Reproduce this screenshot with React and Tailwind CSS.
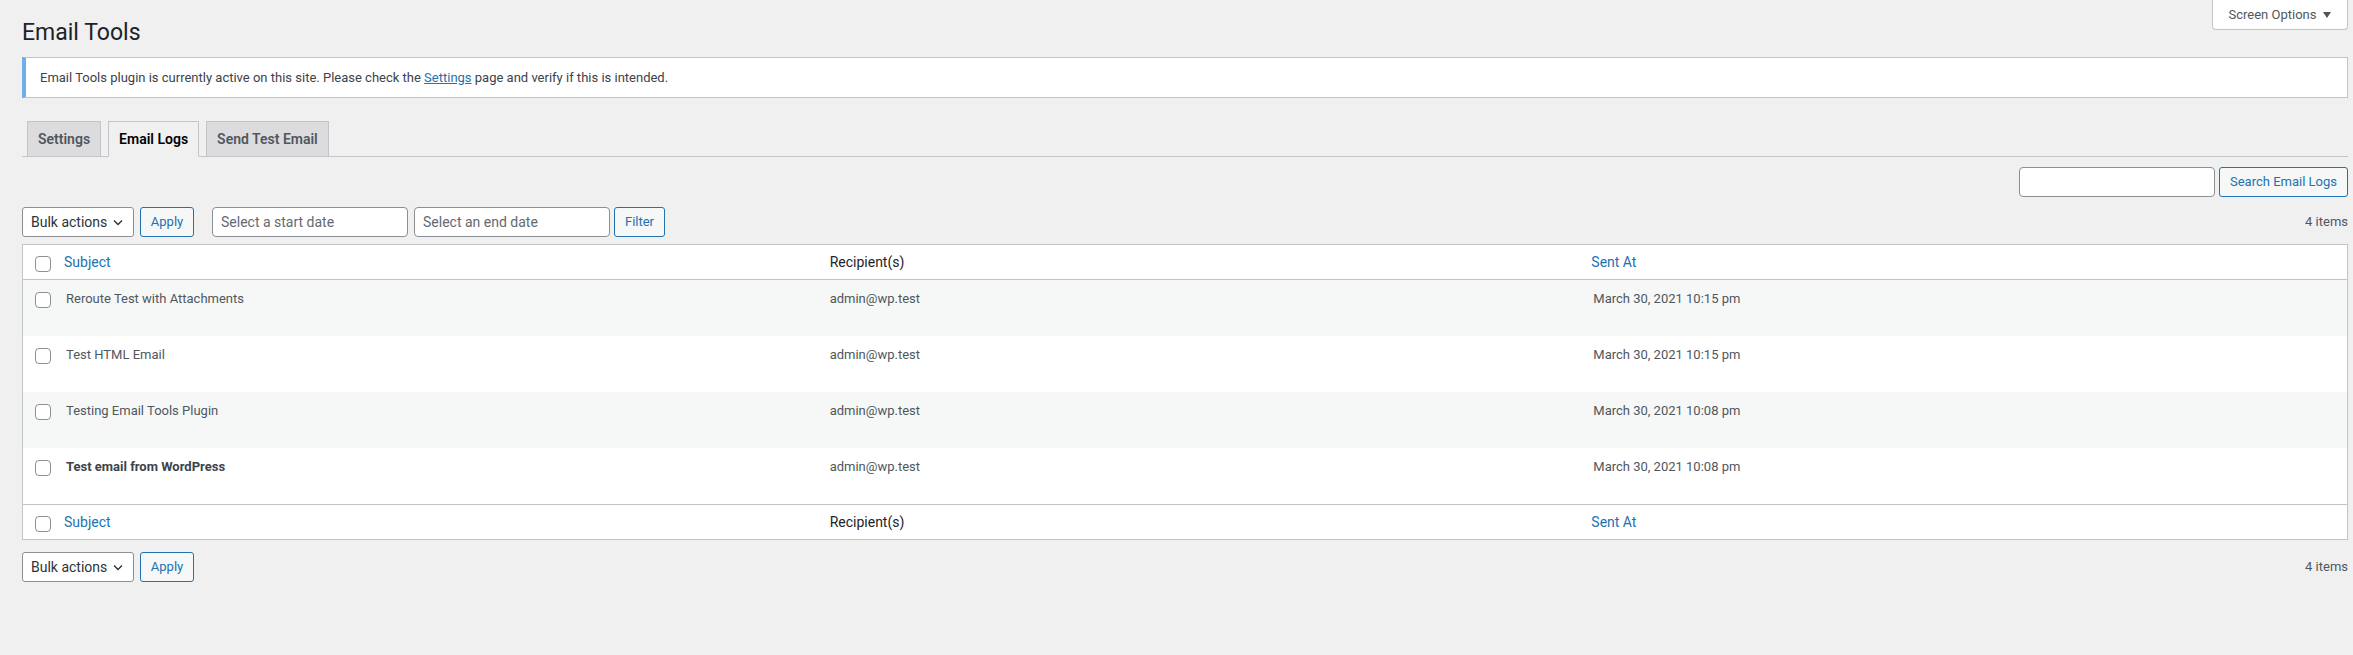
import React from 'react';

const rows = [
  { subject: 'Reroute Test with Attachments', to: 'admin@wp.test', sent: 'March 30, 2021 10:15 pm' },
  { subject: 'Test HTML Email', to: 'admin@wp.test', sent: 'March 30, 2021 10:15 pm' },
  { subject: 'Testing Email Tools Plugin', to: 'admin@wp.test', sent: 'March 30, 2021 10:08 pm' },
  { subject: 'Test email from WordPress', to: 'admin@wp.test', sent: 'March 30, 2021 10:08 pm', bold: true },
];

const Checkbox = () => (
  <span className="block w-[16px] h-[16px] border border-[#8c8f94] rounded-[4px] bg-white" />
);

const Chevron = () => (
  <svg width="10" height="7" viewBox="0 0 10 7" className="ml-[6px]">
    <polyline points="1,1.5 5,5.5 9,1.5" fill="none" stroke="#2c3338" strokeWidth="1.4" />
  </svg>
);

const BulkActions = () => (
  <div className="flex items-center gap-[6px]">
    <div className="flex items-center h-[30px] w-[112px] pl-[8px] bg-white border border-[#8c8f94] rounded-[3px] text-[14px] text-[#2c3338]">
      Bulk actions
      <Chevron />
    </div>
    <button className="h-[30px] w-[54px] bg-[#f6f7f7] border border-[#2271b1] rounded-[3px] text-[13px] text-[#2271b1]">
      Apply
    </button>
  </div>
);

const HeaderRow = ({ top }) => (
  <div className={`grid grid-cols-[33px_1fr_1fr_1fr] h-[35px] ${top ? 'border-b' : 'border-t'} border-[#c3c4c7]`}>
    <div className="pl-[12px] pt-[11px]">
      <Checkbox />
    </div>
    <div className="flex items-center pl-[8px] text-[14px] text-[#2271b1]">Subject</div>
    <div className="flex items-center pl-[10px] text-[14px] text-[#1d2327]">Recipient(s)</div>
    <div className="flex items-center pl-[8px] text-[14px] text-[#2271b1]">Sent At</div>
  </div>
);

export default function App() {
  return (
    <div className="min-h-[655px] bg-[#f0f0f1] font-['Roboto',sans-serif] pl-[22px] pr-[5px] text-[#3c434a]">
      <div className="flex justify-between items-start">
        <h1 className="mt-[18px] text-[23px] leading-[30px] font-normal text-[#1d2327]">Email Tools</h1>
        <button className="flex items-center justify-center gap-[7px] h-[30px] w-[136px] bg-white border border-t-0 border-[#c3c4c7] rounded-b-[4px] text-[13px] text-[#50575e]">
          Screen Options
          <svg width="8" height="6" viewBox="0 0 8 6">
            <polygon points="0,0 8,0 4,6" fill="#50575e" />
          </svg>
        </button>
      </div>

      <div className="mt-[9px] h-[41px] flex items-center pl-[14px] bg-white border border-[#c3c4c7] border-l-4 border-l-[#72aee6] text-[13px]">
        <span>
          Email Tools plugin is currently active on this site. Please check the{' '}
          <a className="text-[#2271b1] underline">Settings</a> page and verify if this is intended.
        </span>
      </div>

      <div className="mt-[23px] flex gap-[7px] pl-[5px] border-b border-[#c3c4c7]">
        <div className="-mb-px h-[36px] px-[10px] flex items-center bg-[#dcdcde] border border-[#c3c4c7] text-[14px] font-semibold text-[#50575e]">
          Settings
        </div>
        <div className="-mb-px h-[36px] px-[10px] flex items-center bg-[#f0f0f1] border border-[#c3c4c7] border-b-[#f0f0f1] text-[14px] font-semibold text-black">
          Email Logs
        </div>
        <div className="-mb-px h-[36px] px-[10px] flex items-center bg-[#dcdcde] border border-[#c3c4c7] text-[14px] font-semibold text-[#50575e]">
          Send Test Email
        </div>
      </div>

      <div className="mt-[10px] flex justify-end gap-[4px]">
        <div className="h-[30px] w-[196px] bg-white border border-[#8c8f94] rounded-[4px]" />
        <button className="h-[30px] w-[129px] bg-[#f6f7f7] border border-[#2271b1] rounded-[3px] text-[13px] text-[#2271b1]">
          Search Email Logs
        </button>
      </div>

      <div className="mt-[10px] flex items-center justify-between">
        <div className="flex items-center">
          <BulkActions />
          <div className="ml-[18px] flex items-center gap-[6px]">
            <div className="h-[30px] w-[196px] flex items-center pl-[8px] bg-white border border-[#8c8f94] rounded-[4px] text-[14px] text-[#646970]">
              Select a start date
            </div>
            <div className="h-[30px] w-[196px] flex items-center pl-[8px] bg-white border border-[#8c8f94] rounded-[4px] text-[14px] text-[#646970]">
              Select an end date
            </div>
            <button className="-ml-[2px] h-[30px] w-[51px] bg-[#f6f7f7] border border-[#2271b1] rounded-[3px] text-[13px] text-[#2271b1]">
              Filter
            </button>
          </div>
        </div>
        <span className="text-[13px] text-[#50575e]">4 items</span>
      </div>

      <div className="mt-[7px] bg-white border border-[#c3c4c7]">
        <HeaderRow top />
        {rows.map((r, i) => (
          <div
            key={r.subject}
            className={`grid grid-cols-[33px_1fr_1fr_1fr] h-[56px] text-[13px] leading-[19.5px] ${i % 2 === 0 ? 'bg-[#f6f7f7]' : 'bg-white'}`}
          >
            <div className="pl-[12px] pt-[12px]">
              <Checkbox />
            </div>
            <div className={`pl-[10px] pt-[9px] ${r.bold ? 'font-bold text-[#3c434a]' : 'text-[#50575e]'}`}>{r.subject}</div>
            <div className="pl-[10px] pt-[9px] text-[#50575e]">{r.to}</div>
            <div className="pl-[10px] pt-[9px] text-[#50575e]">{r.sent}</div>
          </div>
        ))}
        <HeaderRow />
      </div>

      <div className="mt-[12px] flex items-center justify-between">
        <BulkActions />
        <span className="text-[13px] text-[#50575e]">4 items</span>
      </div>
    </div>
  );
}
